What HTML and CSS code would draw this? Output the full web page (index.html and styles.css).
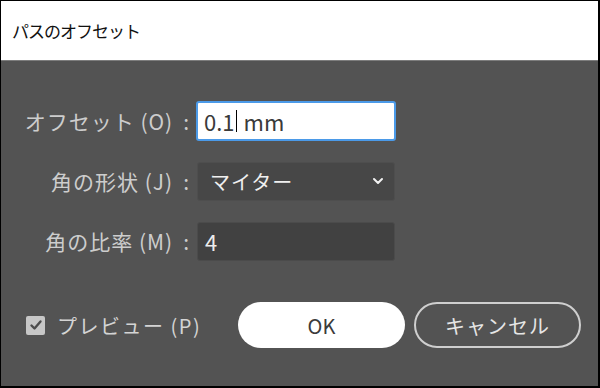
FILE: index.html
```html
<!DOCTYPE html>
<html lang="ja">
<head>
<meta charset="utf-8">
<title>パスのオフセット</title>
<link rel="stylesheet" href="styles.css">
</head>
<body>
<div class="window">
  <div class="titlebar">パスのオフセット</div>
  <div class="content">
    <div class="form">
      <label class="lbl">オフセット (O)<span class="colon">:</span></label>
      <div class="field field-active"><span>0.1</span><span class="caret"></span><span class="unit">mm</span></div>

      <label class="lbl">角の形状 (J)<span class="colon">:</span></label>
      <div class="field field-select"><span class="opt">マイター</span>
        <svg class="chevron" width="12" height="8" viewBox="0 0 12 8"><path d="M2 2 L6 6 L10 2" fill="none" stroke="#f2f2f2" stroke-width="2" stroke-linecap="round" stroke-linejoin="round"/></svg>
      </div>

      <label class="lbl">角の比率 (M)<span class="colon">:</span></label>
      <div class="field field-dark"><span>4</span></div>
    </div>

    <div class="actions">
      <label class="preview">
        <span class="check"><svg width="14" height="14" viewBox="0 0 14 14"><path d="M2.5 7.5 L5.5 10.5 L11.5 3.5" fill="none" stroke="#4d4d4d" stroke-width="2.4" stroke-linecap="round" stroke-linejoin="round"/></svg></span>
        <span>プレビュー (P)</span>
      </label>
      <button class="btn btn-primary">OK</button>
      <button class="btn btn-secondary">キャンセル</button>
    </div>
  </div>
</div>
</body>
</html>
```

FILE: styles.css
```css
* { box-sizing: border-box; }
html, body { margin: 0; padding: 0; background: #000; }
body { font-family: "Noto Sans CJK JP", "Noto Sans", sans-serif; }

.window {
  width: 600px;
  height: 388px;
  border-style: solid;
  border-color: #000;
  border-width: 1px 2px 2px 1px;
  display: flex;
  flex-direction: column;
  background: #535353;
}

.titlebar {
  height: 60px;
  background: #fff;
  border-bottom: 1px solid #7d7d7d;
  color: #111;
  font-size: 17px;
  letter-spacing: -1px;
  padding: 19px 0 0 11px;
  line-height: 22px;
}

.content {
  flex: 1;
  display: flex;
  flex-direction: column;
}

.form {
  margin-top: 40px;
  display: grid;
  grid-template-columns: 191px 200px;
  grid-auto-rows: 40px;
  column-gap: 4px;
  row-gap: 20px;
  align-items: center;
}

.lbl {
  text-align: right;
  color: #cdcdcd;
  font-size: 21px;
  letter-spacing: 1px;
  white-space: nowrap;
  padding-right: 2px;
}

.colon {
  margin-left: 10px;
}

.field {
  height: 40px;
  display: flex;
  align-items: center;
  font-size: 22px;
  border-radius: 3px;
}

.field-active {
  background: #fff;
  border: 2px solid #4b9ae8;
  color: #3a3a3a;
  padding-left: 6px;
}

.caret {
  width: 1px;
  height: 22px;
  background: #000;
  margin: 0 7px 0 1px;
}

.field-select {
  margin-left: 1px;
  width: 198px;
  height: 39px;
  background: #474747;
  border: 1px solid #4e4e4e;
  color: #f0f0f0;
  padding: 0 10px 0 12px;
  justify-content: space-between;
}

.opt {
  font-size: 20px;
  letter-spacing: 1px;
}

.field-dark {
  margin-left: 1px;
  width: 198px;
  height: 39px;
  background: #414141;
  border: 1px solid #4b4b4b;
  color: #ececec;
  padding-left: 7px;
}

.actions {
  margin-top: 41px;
  display: flex;
  align-items: center;
}

.preview {
  width: 237px;
  padding-left: 25px;
  display: flex;
  align-items: center;
  gap: 12px;
  color: #d4d4d4;
  font-size: 20px;
  letter-spacing: 1.5px;
  white-space: nowrap;
}

.check {
  width: 19px;
  height: 19px;
  border-radius: 2px;
  background: #c7c7c7;
  display: flex;
  align-items: center;
  justify-content: center;
  flex: none;
}

.btn {
  height: 46px;
  width: 167px;
  border-radius: 23px;
  font-family: "Noto Sans CJK JP", "Noto Sans", sans-serif;
  font-size: 20px;
  padding: 0;
}

.btn-primary {
  background: #fff;
  border: none;
  color: #3b3b3b;
}

.btn-secondary {
  margin-left: 9px;
  background: transparent;
  border: 2px solid #cfcfcf;
  color: #e6e6e6;
  letter-spacing: 1px;
}
```
